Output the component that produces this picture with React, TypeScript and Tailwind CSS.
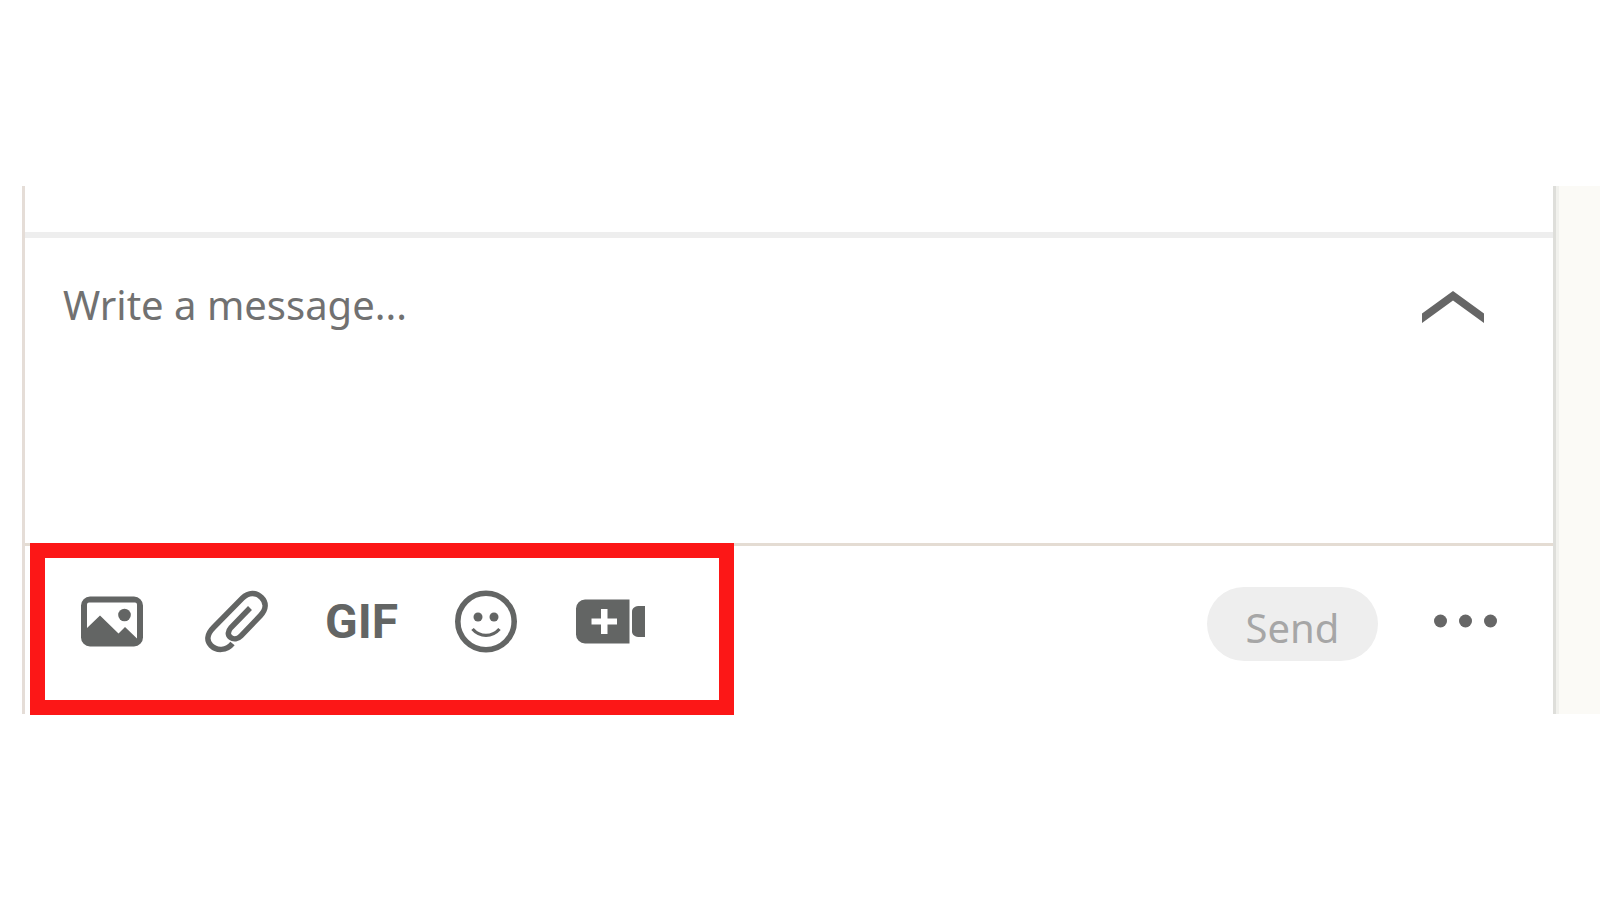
import React from 'react';

type IconProps = { children: React.ReactNode };

const Icon: React.FC<IconProps> = ({ children }) => (
  <svg viewBox="0 0 75 75" className="size-full" fill="none" aria-hidden="true">
    {children}
  </svg>
);

const ImageIcon = () => (
  <Icon>
    <path
      fill="currentColor"
      fillRule="evenodd"
      d="M16 12.500h44a9 9 0 0 1 9 9v32a9 9 0 0 1-9 9H16a9 9 0 0 1-9-9v-32a9 9 0 0 1 9-9ZM15 18.500a2 2 0 0 0-2 2V44L26 31.500 44.500 49.500l6.500-6.500L63 54.500V20.500a2 2 0 0 0-2-2Z"
    />
    <circle cx="50.500" cy="31" r="6.300" fill="currentColor" />
  </Icon>
);

const ClipIcon = () => (
  <Icon>
    <path
      stroke="currentColor"
      strokeWidth="5.500"
      d="M51 24 32 43.500C28.500 47.500 28.500 51 31.500 53.300C34.500 55.800 39 55 42 51.800L61.500 31.500C67.500 25 67.500 18.500 62.500 13.500C57 8 49.500 8 43.500 14L14.500 43.500C7.500 50.500 7.500 57 12 61.500C17.500 67 27.500 67 33.500 59.500"
    />
  </Icon>
);

const SmileIcon = () => (
  <Icon>
    <circle cx="37" cy="37.500" r="28.200" stroke="currentColor" strokeWidth="5.600" />
    <circle cx="29" cy="33" r="4.500" fill="currentColor" />
    <circle cx="45" cy="33" r="4.500" fill="currentColor" />
    <path stroke="currentColor" strokeWidth="3.300" d="M23.500 45C31 53.500 43 53.500 50.500 45" />
  </Icon>
);

const VideoIcon = () => (
  <Icon>
    <path
      fill="currentColor"
      fillRule="evenodd"
      d="M11 15.500h44.500v44H11a9 9 0 0 1-9-9v-26a9 9 0 0 1 9-9ZM27 25v9.500h-9.500v6H27V50h6.500v-9.500H43v-6h-9.500V25Z"
    />
    <path fill="currentColor" d="M71 22v31h-5c-5 0-8-2-8-5.500v-20c0-3.500 3-5.500 8-5.500Z" />
  </Icon>
);

const tools = [
  { label: 'Attach an image', content: <ImageIcon /> },
  { label: 'Attach a file', content: <ClipIcon /> },
  { label: 'GIF', content: 'GIF' },
  { label: 'Add an emoji', content: <SmileIcon /> },
  { label: 'Start a video meeting', content: <VideoIcon /> },
];

const Toolbar = () => (
  <div className="-mt-[3px] ml-[5px] flex gap-[50px] border-[15px] border-[#fc1717] bg-white pt-[26px] pr-[70px] pb-[41px] pl-[29px]">
    {tools.map((tool) => (
      <button
        key={tool.label}
        type="button"
        aria-label={tool.label}
        className="flex size-[75px] items-center justify-center font-['Roboto',sans-serif] text-[48px] leading-none font-bold text-[#636564]"
      >
        {tool.content}
      </button>
    ))}
  </div>
);

export default function App() {
  return (
    <main className="flex min-h-screen items-center bg-white pl-[22px] font-['Noto_Sans',sans-serif]">
      <div className="flex w-full">
        <form className="flex-1 border-l-[3px] border-[#e5ddd7]" onSubmit={(e) => e.preventDefault()}>
          <div className="h-[52px] border-b-[6px] border-[#eeeeee]" />
          <div className="flex h-[305px] items-start">
            <textarea
              aria-label="Write a message"
              placeholder="Write a message..."
              className="h-full flex-1 resize-none pt-[39px] pl-[38px] text-[40px] leading-[56px] text-[#666666] outline-none placeholder:text-[#717171]"
            />
            <button type="button" aria-label="Expand" className="mt-[53px] mr-[69px] text-[#666666]">
              <svg viewBox="0 0 62 32" className="h-8 w-[62px]" aria-hidden="true">
                <path fill="currentColor" d="M31 0 62 22.500V32L31 9.500 0 32V22.500Z" />
              </svg>
            </button>
          </div>
          <div className="flex h-[171px] items-start justify-between border-t-[3px] border-[#e4dcd3]">
            <Toolbar />
            <div className="mt-[41px] mr-[55px] flex items-center gap-[56px]">
              <button
                type="submit"
                disabled
                className="h-[74px] w-[171px] rounded-full bg-[#eeeeee] pt-2 text-[40px] leading-[56px] text-[#a6a6a6]"
              >
                Send
              </button>
              <button type="button" aria-label="More options" className="text-[#666666]">
                <svg viewBox="0 0 64 14" className="mb-[6px] h-3.5 w-16" fill="currentColor" aria-hidden="true">
                  <circle cx="6.500" cy="7" r="6.500" />
                  <circle cx="31.500" cy="7" r="6.500" />
                  <circle cx="56.500" cy="7" r="6.500" />
                </svg>
              </button>
            </div>
          </div>
        </form>
        <div className="w-[47px] border-l-[3px] border-[#dededa]">
          <div className="h-full border-l-[3px] border-[#f1f1ed] bg-[#fbfaf6]" />
        </div>
      </div>
    </main>
  );
}
